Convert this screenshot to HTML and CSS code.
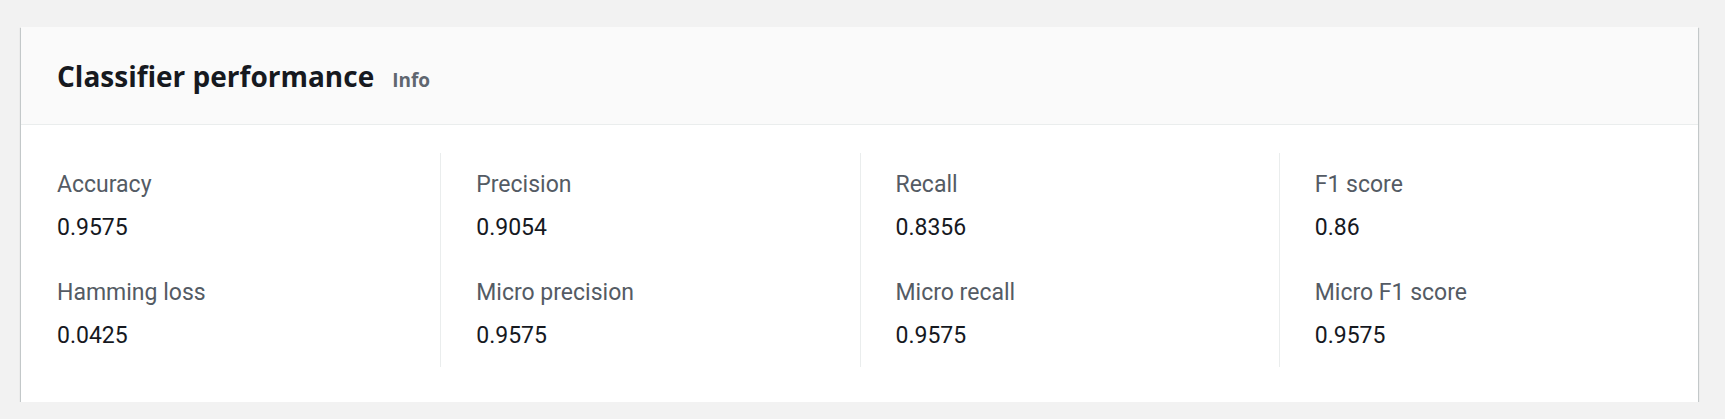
FILE: index.html
```html
<!DOCTYPE html>
<html lang="en">
<head>
<meta charset="utf-8">
<title>Classifier performance</title>
<link rel="stylesheet" href="styles.css">
</head>
<body>
<div class="page">
  <section class="card">
    <header class="card-header">
      <h2 class="title">Classifier performance</h2>
      <a class="info" href="#">Info</a>
    </header>
    <div class="card-body">
      <div class="columns">
        <div class="col">
          <div class="kv">
            <div class="label">Accuracy</div>
            <div class="value">0.9575</div>
          </div>
          <div class="kv">
            <div class="label">Hamming loss</div>
            <div class="value">0.0425</div>
          </div>
        </div>
        <div class="col">
          <div class="kv">
            <div class="label">Precision</div>
            <div class="value">0.9054</div>
          </div>
          <div class="kv">
            <div class="label">Micro precision</div>
            <div class="value">0.9575</div>
          </div>
        </div>
        <div class="col">
          <div class="kv">
            <div class="label">Recall</div>
            <div class="value">0.8356</div>
          </div>
          <div class="kv">
            <div class="label">Micro recall</div>
            <div class="value">0.9575</div>
          </div>
        </div>
        <div class="col">
          <div class="kv">
            <div class="label">F1 score</div>
            <div class="value">0.86</div>
          </div>
          <div class="kv">
            <div class="label">Micro F1 score</div>
            <div class="value">0.9575</div>
          </div>
        </div>
      </div>
    </div>
  </section>
</div>
</body>
</html>
```

FILE: styles.css
```css
html, body {
  margin: 0;
  padding: 0;
  background: #f2f2f2;
}

.page {
  padding: 27px 27px 0 21px;
}

.card {
  background: #ffffff;
  box-shadow: 0 1px 1px 0 rgba(0, 28, 36, 0.3),
              1px 1px 1px 0 rgba(0, 28, 36, 0.15),
              -1px 1px 1px 0 rgba(0, 28, 36, 0.15);
}

.card-header {
  display: flex;
  align-items: baseline;
  gap: 18px;
  background: #fafafa;
  border-bottom: 1px solid #eaeded;
  padding: 31px 36px 30px;
}

.title {
  margin: 0;
  font-family: "Open Sans", "Liberation Sans", sans-serif;
  font-weight: 700;
  font-size: 28px;
  line-height: 36px;
  color: #16191f;
}

.info {
  font-family: "Open Sans", "Liberation Sans", sans-serif;
  font-weight: 700;
  font-size: 19px;
  color: #5f666f;
  text-decoration: none;
}

.card-body {
  padding: 28px 0 35px;
}

.columns {
  display: grid;
  grid-template-columns: repeat(4, 1fr);
}

.col {
  display: flex;
  flex-direction: column;
  gap: 35px;
  padding: 17px 35px 16px 36px;
}

.col + .col {
  border-left: 1px solid #eaeded;
  padding-left: 35px;
}

.kv {
  display: flex;
  flex-direction: column;
  gap: 13px;
  font-family: Roboto, "Liberation Sans", sans-serif;
  font-size: 23px;
  line-height: 30px;
}

.label {
  color: #545b64;
}

.value {
  color: #16191f;
}
```
